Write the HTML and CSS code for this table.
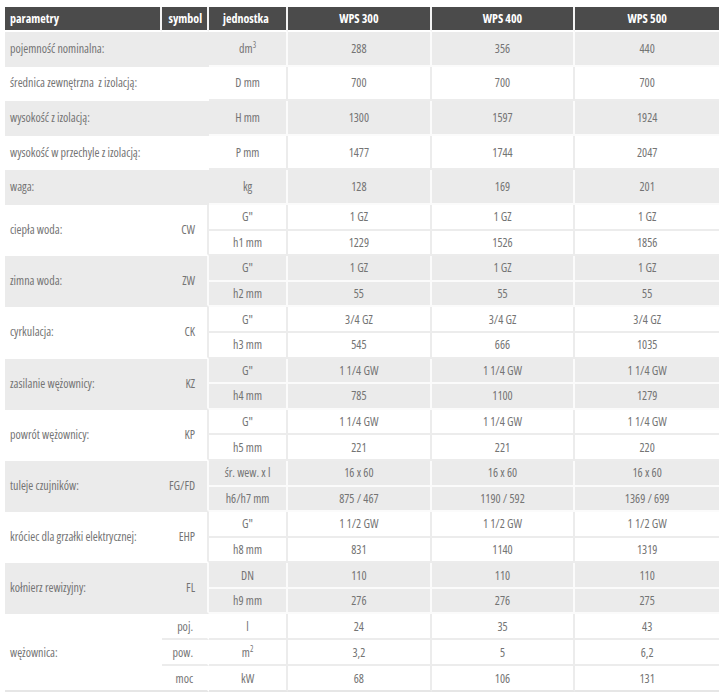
FILE: index.html
```html
<!DOCTYPE html>
<html lang="pl">
<head>
<meta charset="utf-8">
<link rel="stylesheet" href="styles.css">
</head>
<body>
<table class="spec">
  <colgroup>
    <col class="c-param"><col class="c-sym"><col class="c-unit"><col class="c-val"><col class="c-val"><col class="c-val">
  </colgroup>
  <thead>
    <tr>
      <th class="h-left">parametry</th>
      <th class="h-right">symbol</th>
      <th class="h-unit">jednostka</th>
      <th>WPS 300</th>
      <th>WPS 400</th>
      <th>WPS 500</th>
    </tr>
  </thead>
  <tbody>
    <tr class="single gray"><td class="param" colspan="2">pojemność nominalna:</td><td>dm<sup>3</sup></td><td>288</td><td>356</td><td>440</td></tr>
    <tr class="single white"><td class="param" colspan="2">średnica zewnętrzna&nbsp; z izolacją:</td><td>D mm</td><td>700</td><td>700</td><td>700</td></tr>
    <tr class="single gray"><td class="param" colspan="2">wysokość z izolacją:</td><td>H mm</td><td>1300</td><td>1597</td><td>1924</td></tr>
    <tr class="single white"><td class="param" colspan="2">wysokość w przechyle z izolacją:</td><td>P mm</td><td>1477</td><td>1744</td><td>2047</td></tr>
    <tr class="single gray"><td class="param" colspan="2">waga:</td><td>kg</td><td>128</td><td>169</td><td>201</td></tr>

    <tr class="sub white"><td class="param" rowspan="2">ciepła woda:</td><td class="sym" rowspan="2">CW</td><td>G"</td><td>1 GZ</td><td>1 GZ</td><td>1 GZ</td></tr>
    <tr class="sub white"><td>h1 mm</td><td>1229</td><td>1526</td><td>1856</td></tr>

    <tr class="sub gray"><td class="param" rowspan="2">zimna woda:</td><td class="sym" rowspan="2">ZW</td><td>G"</td><td>1 GZ</td><td>1 GZ</td><td>1 GZ</td></tr>
    <tr class="sub gray"><td>h2 mm</td><td>55</td><td>55</td><td>55</td></tr>

    <tr class="sub white"><td class="param" rowspan="2">cyrkulacja:</td><td class="sym" rowspan="2">CK</td><td>G"</td><td>3/4 GZ</td><td>3/4 GZ</td><td>3/4 GZ</td></tr>
    <tr class="sub white"><td>h3 mm</td><td>545</td><td>666</td><td>1035</td></tr>

    <tr class="sub gray"><td class="param" rowspan="2">zasilanie wężownicy:</td><td class="sym" rowspan="2">KZ</td><td>G"</td><td>1 1/4 GW</td><td>1 1/4 GW</td><td>1 1/4 GW</td></tr>
    <tr class="sub gray"><td>h4 mm</td><td>785</td><td>1100</td><td>1279</td></tr>

    <tr class="sub white"><td class="param" rowspan="2">powrót wężownicy:</td><td class="sym" rowspan="2">KP</td><td>G"</td><td>1 1/4 GW</td><td>1 1/4 GW</td><td>1 1/4 GW</td></tr>
    <tr class="sub white"><td>h5 mm</td><td>221</td><td>221</td><td>220</td></tr>

    <tr class="sub gray"><td class="param" rowspan="2">tuleje czujników:</td><td class="sym" rowspan="2">FG/FD</td><td>śr. wew. x l</td><td>16 x 60</td><td>16 x 60</td><td>16 x 60</td></tr>
    <tr class="sub gray"><td>h6/h7 mm</td><td>875 / 467</td><td>1190 / 592</td><td>1369 / 699</td></tr>

    <tr class="sub white"><td class="param" rowspan="2">króciec dla grzałki elektrycznej:</td><td class="sym" rowspan="2">EHP</td><td>G"</td><td>1 1/2 GW</td><td>1 1/2 GW</td><td>1 1/2 GW</td></tr>
    <tr class="sub white"><td>h8 mm</td><td>831</td><td>1140</td><td>1319</td></tr>

    <tr class="sub gray"><td class="param" rowspan="2">kołnierz rewizyjny:</td><td class="sym" rowspan="2">FL</td><td>DN</td><td>110</td><td>110</td><td>110</td></tr>
    <tr class="sub gray"><td>h9 mm</td><td>276</td><td>276</td><td>275</td></tr>

    <tr class="coil white"><td class="param" rowspan="3">wężownica:</td><td class="sym line">poj.</td><td>l</td><td>24</td><td>35</td><td>43</td></tr>
    <tr class="coil white"><td class="sym line">pow.</td><td>m<sup>2</sup></td><td>3,2</td><td>5</td><td>6,2</td></tr>
    <tr class="coil white last"><td class="sym line">moc</td><td>kW</td><td>68</td><td>106</td><td>131</td></tr>
  </tbody>
</table>
</body>
</html>
```

FILE: styles.css
```css
html, body {
  margin: 0;
  padding: 0;
  background: #ffffff;
}

body {
  padding: 7px 0 0 5px;
  font-family: "Open Sans", "Roboto", sans-serif;
  font-stretch: 78%;
  font-size: 12px;
  color: #747474;
}

.spec {
  border-collapse: separate;
  border-spacing: 0;
  width: 714px;
  table-layout: fixed;
}

.c-param { width: 157px; }
.c-sym { width: 47px; }
.c-unit { width: 79px; }
.c-val { width: 143.6px; }

.spec th {
  background: #4b4b4b;
  color: #ffffff;
  font-weight: bold;
  height: 25px;
  padding: 0;
  text-align: center;
  border-right: 2px solid #f4f4f4;
  border-bottom: 2px solid #ffffff;
  box-sizing: border-box;
}
.spec th:last-child { border-right: 0; }
.spec th.h-left { text-align: left; padding-left: 5px; }
.spec th.h-right { text-align: right; padding-right: 5px; }
.spec th.h-unit { text-align: left; padding-left: 14px; }

.spec td {
  padding: 0;
  text-align: center;
  vertical-align: middle;
  border-right: 2px solid;
  border-bottom: 2px solid;
  white-space: nowrap;
}
.spec td:last-child { border-right: 0; }

.gray td { background: #ebebeb; border-color: #fbfbfb; }
.white td { background: #ffffff; border-color: #ececec; }

.single td { height: 32.6px; }
.sub td { height: 23.6px; }
.coil td { height: 24px; }

.spec td.param {
  text-align: left;
  padding-left: 5px;
  border-right: 0;
}
.spec td.sym {
  text-align: right;
  padding-right: 12px;
}
.spec td.sym.line { padding-right: 14px; }

.gray td.param, .gray td.sym { border-bottom-color: #ebebeb; }
.white td.param { border-bottom-color: #ffffff; }
.white td.sym { border-bottom-color: #ffffff; }
.coil td.sym.line { border-bottom-color: #ececec; border-right-color: #ffffff; }
.last td, .last td.param, .last td.sym.line { border-bottom-color: #e6e6e6; }
.coil td.param { border-bottom-color: #e6e6e6; }

sup {
  font-size: 8px;
  vertical-align: top;
  line-height: 1;
  position: relative;
  top: 1px;
}
```
